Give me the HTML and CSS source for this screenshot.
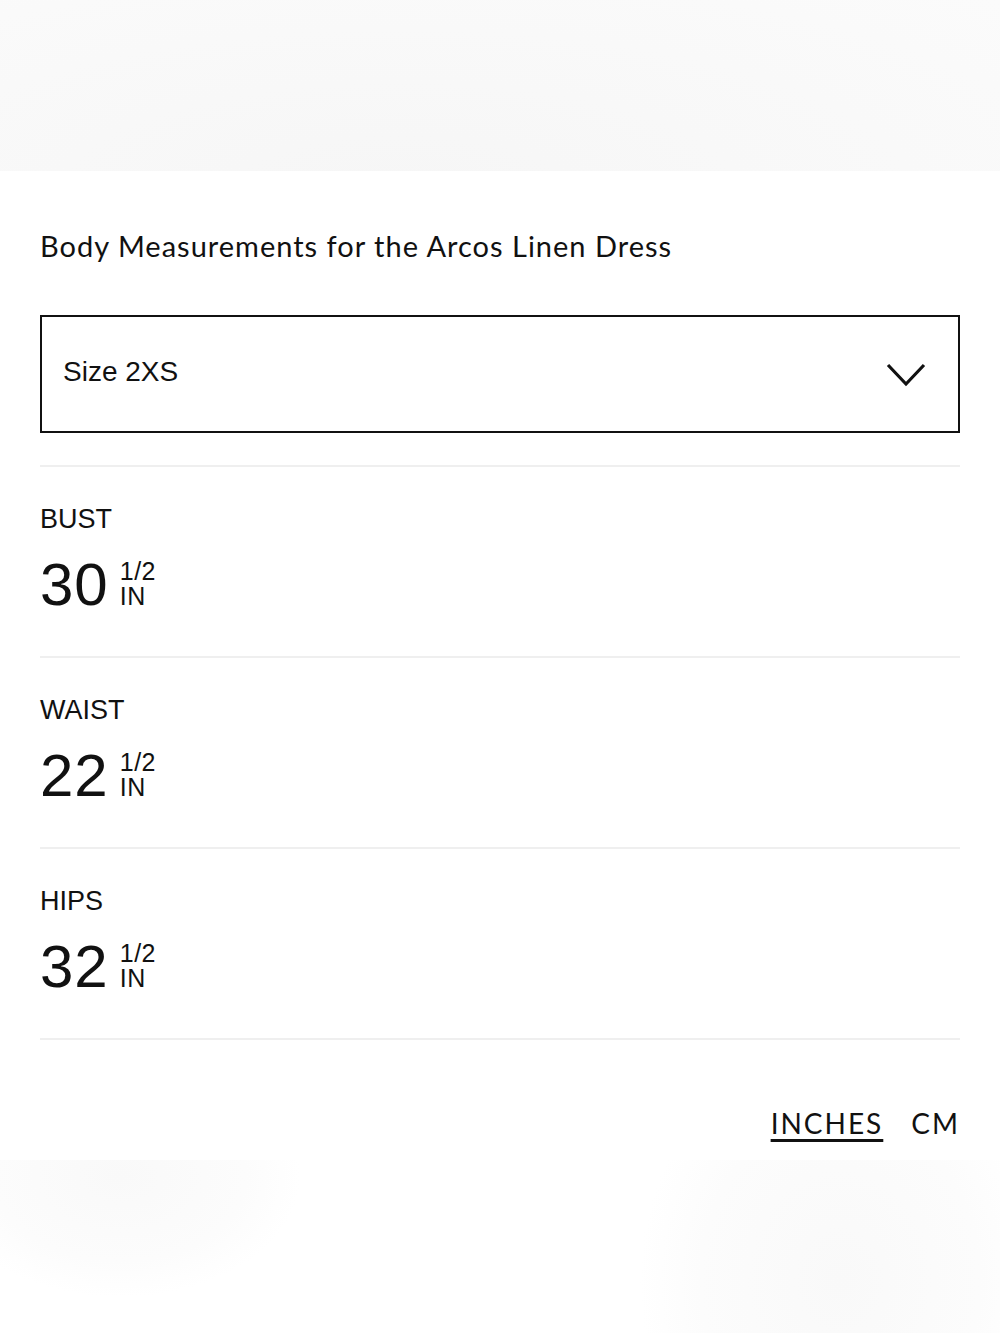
FILE: index.html
```html
<!DOCTYPE html>
<html lang="en">
<head>
    <meta charset="UTF-8">
    <meta name="viewport" content="width=device-width, initial-scale=1.0">
    <title>Body Measurements</title>
    <link rel="stylesheet" href="styles.css">
</head>
<body>
    <div class="backdrop-top"></div>

    <div class="sheet">
        <h2 class="sheet-title">Body Measurements for the Arcos Linen Dress</h2>

        <div class="size-select">
            <span>Size 2XS</span>
            <svg class="chevron" width="40" height="26" viewBox="0 0 40 26">
                <path d="M2 3 L20 22 L38 3" fill="none" stroke="#111" stroke-width="3.2"/>
            </svg>
        </div>

        <div class="measure-list">
            <div class="measure">
                <div class="measure-label">BUST</div>
                <div class="measure-value">
                    <span class="whole">30</span>
                    <span class="frac"><span>1/2</span><span>IN</span></span>
                </div>
            </div>
            <div class="measure">
                <div class="measure-label">WAIST</div>
                <div class="measure-value">
                    <span class="whole">22</span>
                    <span class="frac"><span>1/2</span><span>IN</span></span>
                </div>
            </div>
            <div class="measure">
                <div class="measure-label">HIPS</div>
                <div class="measure-value">
                    <span class="whole">32</span>
                    <span class="frac"><span>1/2</span><span>IN</span></span>
                </div>
            </div>
        </div>

        <div class="units">
            <a class="unit active">INCHES</a>
            <a class="unit">CM</a>
        </div>
    </div>

    <div class="backdrop-bottom"></div>
</body>
</html>
```

FILE: styles.css
```css
body {
    margin: 0;
    background: #fff;
    color: #111;
    font-family: 'Liberation Sans', Arial, sans-serif;
}
.backdrop-top {
    height: 171px;
    background: radial-gradient(ellipse at 40% 110%, #f6f6f6 0%, #f9f9f9 60%, #fbfbfb 100%);
}
.backdrop-bottom {
    height: 173px;
    background:
        radial-gradient(ellipse 180px 120px at 12% 10%, #f9f9f9 0%, #fcfcfc 70%, rgba(255,255,255,0) 100%),
        radial-gradient(ellipse 200px 240px at 84% 70%, #f9f9f9 0%, #fcfcfc 70%, rgba(255,255,255,0) 100%);
}
.sheet {
    padding: 0 40px;
    background: #fff;
}
.sheet-title {
    margin: 0;
    padding-top: 57px;
    font-family: 'Lato', sans-serif;
    font-weight: 400;
    font-size: 29px;
    line-height: 36px;
    letter-spacing: 1px;
}
.size-select {
    margin-top: 51px;
    height: 114px;
    border: 2px solid #111;
    display: flex;
    align-items: center;
    justify-content: space-between;
    padding: 0 32px 0 21px;
    font-size: 28px;
}
.size-select span {
    margin-top: -4px;
}
.chevron {
    margin-top: 2px;
}
.measure-list {
    margin-top: 32px;
}
.measure {
    border-top: 2px solid #efefef;
    height: 155px;
    padding-top: 34px;
}
.measure-label {
    font-size: 27px;
    line-height: 36px;
}
.measure-value {
    display: flex;
    align-items: flex-end;
    gap: 11px;
    margin-top: 18px;
}
.whole {
    font-size: 60px;
    line-height: 60px;
    letter-spacing: 1px;
}
.frac {
    display: flex;
    flex-direction: column;
    font-size: 25px;
    line-height: 25px;
    letter-spacing: 0.5px;
    padding-bottom: 6px;
}
.units {
    border-top: 2px solid #efefef;
    display: flex;
    justify-content: flex-end;
    gap: 28px;
    padding-top: 67px;
    height: 53px;
}
.unit {
    font-family: 'Lato', sans-serif;
    font-size: 28px;
    line-height: 32px;
    letter-spacing: 2px;
    color: #111;
}
.unit.active {
    text-decoration: underline;
    text-decoration-thickness: 3px;
    text-underline-offset: 5px;
}
```
